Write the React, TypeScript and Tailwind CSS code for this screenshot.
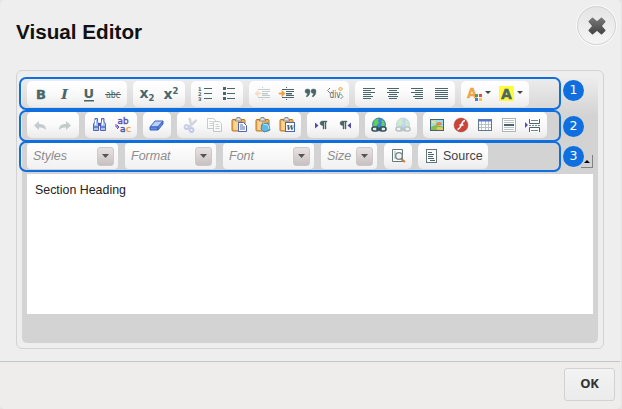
import type { ReactNode } from 'react';

const INK = '#4a6668';

function Group({ children }: { children: ReactNode }) {
  return (
    <div className="flex h-[26px] items-center rounded-[5px] bg-linear-to-b from-white via-[#fafafa] to-[#ebebeb] px-[2px]">
      {children}
    </div>
  );
}

function Btn({ label, faded, children }: { label: string; faded?: boolean; children: ReactNode }) {
  return (
    <button aria-label={label} className={`flex h-[26px] w-6 items-center justify-center ${faded ? 'opacity-30' : ''}`}>
      <svg width="16" height="16" viewBox="0 0 16 16" className="overflow-visible">
        {children}
      </svg>
    </button>
  );
}

/* Horizontal strokes given as [x, y, width]. */
function Lines({ rows, color = INK, h = 1 }: { rows: number[][]; color?: string; h?: number }) {
  return (
    <>
      {rows.map(([x, y, w], i) => (
        <rect key={i} x={x} y={y} width={w} height={h} fill={color} />
      ))}
    </>
  );
}

function AlignIcon({ kind }: { kind: 'left' | 'center' | 'right' | 'justify' }) {
  return (
    <Lines
      rows={[12, 8, 12, 8, 10, 8].map((ragged, i) => {
        const w = kind === 'justify' ? 13 : ragged;
        const x = kind === 'center' ? 8 - w / 2 : kind === 'right' ? 14 - w : 2;
        return [x, 2 + i * 2, w];
      })}
    />
  );
}

function Indent({ faded }: { faded?: boolean }) {
  return (
    <>
      <path d={faded ? 'M6 7v1H3v2.500L0 7.500 3 4.500V7z' : 'M0 7v1h3v2.500L6 7.500 3 4.500V7z'} fill="#f0a040" stroke="#f0a040" strokeWidth=".8" />
      <Lines rows={[[7, 1, 1], [3, 3, 12], [7, 5, 8], [7, 9, 8], [3, 11, 12], [7, 13, 1]]} />
      <rect x="7" y="7" width="6" height="1.500" fill={INK} />
    </>
  );
}

function Clipboard() {
  return (
    <>
      <rect x="1" y="2.500" width="13" height="11.500" rx="1" fill="#eeb15b" stroke="#b87528" />
      <path d="M2.500 4h4.500v9H2.500z" fill="#fbd494" />
      <path d="M4.500 4V2H6V.5h3V2h1.500v2z" fill="#e5e1df" stroke="#777" strokeWidth=".8" />
    </>
  );
}

function LinkIcon() {
  return (
    <>
      <circle cx="8" cy="7.500" r="6.500" fill="#3f83e3" stroke="#285eae" strokeWidth=".7" />
      <path d="M3 4q2-3 5-2l-1 2 1 2-2 2-1 3-3-2zM10 3l3 1 1 4-2 2-2-2 1-2z" fill="#60d150" />
      <rect x="1" y="10" width="6" height="4" rx="2" fill="#e5eded" stroke="#344f52" strokeWidth="1.600" />
      <rect x="9" y="10" width="6" height="4" rx="2" fill="#e5eded" stroke="#344f52" strokeWidth="1.600" />
      <path d="M5 12h6" stroke="#344f52" strokeWidth="1.500" />
    </>
  );
}

function Pilcrow({ x }: { x: number }) {
  return <path transform={`translate(${x} 0)`} d="M7 4v1H6v7H5V5H4v7H3V8.500H2Q0 8 0 6.200T2 4z" fill={INK} stroke={INK} strokeWidth=".4" />;
}

function Combo({ label, wide = true }: { label: string; wide?: boolean }) {
  return (
    <button
      className={`flex h-[26px] items-center justify-between rounded-[4px] bg-linear-to-b from-white to-[#f1f1f1] pr-1 pl-1.5 ${wide ? 'w-[91px]' : 'w-14'}`}
    >
      <span className="font-['Liberation_Sans',sans-serif] text-[12.5px] text-[#8c8c8c] italic">{label}</span>
      <span className="flex h-[19px] w-[17px] items-center justify-center rounded-[3px] border border-[#cfc8c8] bg-linear-to-b from-[#e8e3e3] to-[#c8c0c0]">
        <svg width="7" height="4" viewBox="0 0 7 4" className="-mt-px">
          <path d="M0 0h7L3.500 4z" fill="#555" />
        </svg>
      </span>
    </button>
  );
}

function Caret() {
  return (
    <svg width="6" height="3" viewBox="0 0 6 3" className="mb-[3px] -ml-[2px]">
      <path d="M0 0h6L3 3z" fill="#444" />
    </svg>
  );
}

function Marker({ n, className }: { n: number; className: string }) {
  return (
    <span
      className={`absolute left-[563px] flex h-[21px] w-[21px] items-center justify-center rounded-full bg-[#0f6fde] font-['DejaVu_Sans',sans-serif] text-[12.5px] leading-none text-white ${className}`}
    >
      {n}
    </span>
  );
}

export default function App() {
  return (
    <div className="relative h-[409px] w-[622px] overflow-hidden bg-[#e4e4e4] font-['Liberation_Sans',sans-serif]">
      <div className="flex h-[409px] w-[621px] flex-col rounded-[5px] bg-[#eeeeee]">
        <header className="h-[70px] pt-5 pl-4">
          <h1 className="text-[20.7px] leading-6 font-bold text-[#111]">Visual Editor</h1>
        </header>

        <main className="ml-4 h-[279px] w-[588px] rounded-[6px] border border-[#d3d3d3] p-[5px]">
          <div className="h-[267px] rounded-[5px] bg-[#d3d3d3] bg-linear-to-b from-[#eeeeee] to-[#d3d3d3] to-[40px] px-[5px] pt-[5px]">
            <div className="flex h-[31px] gap-1.5">
              <Group>
                <Btn label="Bold">
                  <text x="3" y="12.500" fontSize="13" fontWeight="700" fontFamily="DejaVu Sans" fill={INK} stroke={INK} strokeWidth=".4">B</text>
                </Btn>
                <Btn label="Italic">
                  <text x="4" y="12.500" fontSize="13" fontWeight="700" fontStyle="italic" fontFamily="DejaVu Serif" textLength="7" lengthAdjust="spacingAndGlyphs" fill={INK}>I</text>
                </Btn>
                <Btn label="Underline">
                  <text x="2.500" y="12" fontSize="13" fontWeight="700" fontFamily="DejaVu Sans" fill={INK}>U</text>
                  <rect x="3" y="14" width="10" height="1.500" fill={INK} />
                </Btn>
                <Btn label="Strike through">
                  <text x="1" y="11.500" fontSize="10" fontFamily="DejaVu Sans" textLength="14" lengthAdjust="spacingAndGlyphs" fill={INK}>abc</text>
                  <rect x="0" y="8" width="16" height="1" fill={INK} />
                </Btn>
              </Group>
              <Group>
                <Btn label="Subscript">
                  <text x="0.500" y="12" fontSize="14.500" fontWeight="700" fontFamily="DejaVu Sans" textLength="9" lengthAdjust="spacingAndGlyphs" fill={INK}>x</text>
                  <text x="9.500" y="15" fontSize="8.500" fontWeight="700" fontFamily="DejaVu Sans" fill={INK}>2</text>
                </Btn>
                <Btn label="Superscript">
                  <text x="0.500" y="13" fontSize="14.500" fontWeight="700" fontFamily="DejaVu Sans" textLength="9" lengthAdjust="spacingAndGlyphs" fill={INK}>x</text>
                  <text x="9.500" y="8" fontSize="8.500" fontWeight="700" fontFamily="DejaVu Sans" fill={INK}>2</text>
                </Btn>
              </Group>
              <Group>
                <Btn label="Numbered list">
                  {[1, 2, 3].map((n) => (
                    <g key={n}>
                      <text x="1" y={n * 5} fontSize="5" fontWeight="700" fontFamily="DejaVu Sans" fill={INK}>{n}</text>
                      <rect x="7" y={n * 5 - 3} width="8" height="1" fill={INK} />
                    </g>
                  ))}
                </Btn>
                <Btn label="Bulleted list">
                  {[2, 7, 12].map((y) => (
                    <g key={y}>
                      <rect x="2" y={y - 1} width="3" height="3" fill={INK} />
                      <rect x="6" y={y} width="8" height="1" fill={INK} />
                    </g>
                  ))}
                </Btn>
              </Group>
              <Group>
                <Btn label="Outdent" faded><Indent faded /></Btn>
                <Btn label="Indent"><Indent /></Btn>
                <Btn label="Quote">
                  {[2, 8].map((x) => (
                    <path key={x} transform={`translate(${x} 3)`} d="M2.500 0A2.300 2.300 0 0 1 5 2.500Q5 6 2 8L1 7.200Q2.500 6 2.500 4.500 0 4.500 0 2.300A2.300 2.300 0 0 1 2.500 0" fill={INK} stroke={INK} strokeWidth=".4" />
                  ))}
                </Btn>
                <Btn label="Div container">
                  <path d="M3 2L.5 4.500 3 7M13.500 8l2.500 2.500-2.500 2.500" fill="none" stroke={INK} strokeDasharray="1.500 .5" />
                  <text x="2.500" y="12" fontSize="10" fontFamily="DejaVu Sans" textLength="11" lengthAdjust="spacingAndGlyphs" fill={INK}>div</text>
                  <path d="M13.500 1l2 2-2 2-2-2z" fill="#ffe5b8" stroke="#eea037" />
                </Btn>
              </Group>
              <Group>
                <Btn label="Align left"><AlignIcon kind="left" /></Btn>
                <Btn label="Center"><AlignIcon kind="center" /></Btn>
                <Btn label="Align right"><AlignIcon kind="right" /></Btn>
                <Btn label="Justify"><AlignIcon kind="justify" /></Btn>
              </Group>
              <Group>
                <div className="flex w-8 items-center">
                  <Btn label="Text color">
                    <text x="0" y="12" fontSize="14" fontWeight="700" fontFamily="DejaVu Sans" textLength="10" lengthAdjust="spacingAndGlyphs" fill="#efa44c" stroke="#efa44c" strokeWidth=".3">A</text>
                    <rect x="8" y="8" width="3" height="3" fill="#43aa52" />
                    <rect x="12" y="8" width="3" height="3" fill="#ee4747" />
                    <rect x="8" y="12" width="3" height="3" fill="#477be9" />
                    <rect x="12" y="12" width="3" height="3" fill="#ffc33d" />
                  </Btn>
                  <Caret />
                </div>
                <div className="flex w-8 items-center">
                  <Btn label="Background color">
                    <rect x="0" y="0" width="15" height="15" fill="#fffb38" />
                    <text x="2" y="12.500" fontSize="14" fontWeight="700" fontFamily="DejaVu Sans" fill={INK} stroke={INK} strokeWidth=".4">A</text>
                  </Btn>
                  <Caret />
                </div>
              </Group>
            </div>

            <div className="flex h-[31px] gap-1.5">
              <Group>
                <Btn label="Undo" faded>
                  <path d="M1 8.500L6 4v3c5 0 7 2 7 6-2-2-4-2.500-7-2.500v2.500z" fill={INK} />
                </Btn>
                <Btn label="Redo" faded>
                  <path d="M14 8.500L9 4v3c-5 0-7 2-7 6 2-2 4-2.500 7-2.500v2.500z" fill={INK} />
                </Btn>
              </Group>
              <Group>
                <Btn label="Find">
                  <path d="M4 1.500h2.500v3L7.500 7v6.500h-5V7L4 5zM10.500 1.500H13v3L14.500 7v6.500h-5V7l1-2.500z" fill="#a5c8f8" stroke="#5c61b8" />
                  <path d="M7 6h3v3H7z" fill="#4c51ae" />
                  <path d="M3 10h4M10 10h4" stroke="#5270c0" strokeWidth="1.500" />
                  <path d="M4.500 3v5M11.500 3v5" stroke="#fff" />
                </Btn>
                <Btn label="Replace">
                  <text x="2.500" y="7" fontSize="9" fontFamily="DejaVu Sans" textLength="11" lengthAdjust="spacingAndGlyphs" stroke="#5450b0" strokeWidth=".4" fill="#5450b0">ab</text>
                  <text x="5" y="15" fontSize="9" fontFamily="DejaVu Sans" stroke="#5450b0" strokeWidth=".4" fill="#5450b0">a</text>
                  <text x="11" y="15" fontSize="9" fontFamily="DejaVu Sans" stroke="#f0a73b" strokeWidth=".4" fill="#f0a73b">c</text>
                  <path d="M1 7v3h3M2 8l2 2-2 2" fill="none" stroke="#5450b0" />
                </Btn>
              </Group>
              <Group>
                <Btn label="Remove format">
                  <path d="M6 4h8l-5 6H1z" fill="#b6d1fc" stroke="#3e62bd" />
                  <path d="M1 10h8v3H1zM9 10l5-6v3l-5 6z" fill="#638ce0" stroke="#3e62bd" strokeLinejoin="round" />
                </Btn>
              </Group>
              <Group>
                <Btn label="Cut" faded>
                  <path d="M6.500 1l2 8M13.500 3L6 10" stroke="#789" strokeWidth="2.500" />
                  <circle cx="3.500" cy="10" r="2" fill="none" stroke="#5563ce" strokeWidth="1.800" />
                  <circle cx="8.500" cy="13" r="2" fill="none" stroke="#5563ce" strokeWidth="1.800" />
                </Btn>
                <Btn label="Copy" faded>
                  {[[0.500, 1.500], [6.500, 4.500]].map(([x, y]) => (
                    <g key={x} transform={`translate(${x} ${y})`}>
                      <path d="M0 0h6l2 2v8H0z" fill="#fff" stroke={INK} />
                      <path d="M2 3h3M2 5h4M2 7h4" stroke="#687978" />
                    </g>
                  ))}
                </Btn>
                <Btn label="Paste">
                  <Clipboard />
                  <path d="M7.500 5.500h5l3 3v6h-8z" fill="#fff" stroke="#4c65b5" />
                  <path d="M9 8h3M9 10h5M9 12h5" stroke="#566caf" />
                </Btn>
                <Btn label="Paste as plain text">
                  <Clipboard />
                  <path d="M7 7l6-1 2 7-6 2-3-3z" fill="#63b9e1" stroke="#4286bb" />
                  <path d="M8 7l5 1 1 4" fill="none" stroke="#b6e6f7" />
                </Btn>
                <Btn label="Paste from Word">
                  <Clipboard />
                  <rect x="6.500" y="5.500" width="9" height="9" fill="#fff" stroke="#4c65b5" />
                  <text x="7.500" y="13" fontSize="8" fontWeight="700" fontStyle="italic" fontFamily="DejaVu Serif" textLength="8" lengthAdjust="spacingAndGlyphs" fill="#425c66">W</text>
                </Btn>
              </Group>
              <Group>
                <Btn label="Left to right">
                  <path d="M2 5.500l3.500 3L2 11.500z" fill="#4f4ba7" />
                  <Pilcrow x={7} />
                </Btn>
                <Btn label="Right to left">
                  <Pilcrow x={3} />
                  <path d="M14 5.500l-3.500 3 3.500 3z" fill="#4f4ba7" />
                </Btn>
              </Group>
              <Group>
                <Btn label="Link"><LinkIcon /></Btn>
                <Btn label="Unlink" faded><LinkIcon /></Btn>
              </Group>
              <Group>
                <Btn label="Image">
                  <rect x="1.500" y="2.500" width="13" height="11" fill="#9ddcf2" stroke="#456369" />
                  <path d="M2 10q6-4 12 0v3H2z" fill="#87bd4e" />
                  <path d="M7 11q4-2 7 0v2H9z" fill="#e5c868" />
                  <path d="M7 8q0-3 3-3t3 3z" fill="#ed873d" />
                  <path d="M3 4h3v2H3z" fill="#ffe264" />
                </Btn>
                <Btn label="Flash">
                  <circle cx="8" cy="8" r="7" fill="#cb4439" stroke="#a64b43" strokeWidth=".5" />
                  <path d="M12 3.500c-4 0-3 8-7.500 9M6.500 8h4" fill="none" stroke="#fff" strokeWidth="1.500" />
                </Btn>
                <Btn label="Table">
                  <rect x="1.500" y="2.500" width="13" height="11" fill="#fff" stroke="#617783" />
                  <path d="M4.500 4v9M8.500 4v9M11.500 4v9M2 7.500h12M2 10.500h12" stroke="#b8c1c5" />
                  <rect x="1" y="2" width="14" height="2.500" fill="#5b79c4" />
                </Btn>
                <Btn label="Horizontal line">
                  <rect x="1.500" y="1.500" width="13" height="13" fill="#fff" stroke="#adb5b4" />
                  <Lines rows={[[3, 3, 10], [3, 5, 10], [3, 10, 10], [3, 12, 10]]} color="#bcc3c2" />
                  <rect x="3" y="7" width="10" height="2" fill={INK} />
                </Btn>
                <Btn label="Page break">
                  <path d="M0 5l3 3-3 3z" fill="#5450b0" />
                  <path d="M4.500 2v4.500h10V2M4.500 15v-4.500h10V15" fill="#fff" stroke={INK} />
                  <path d="M6 3.500h7M6 13.500h7M4 8.500h2m1 0h2m1 0h2m1 0h2" stroke="#73888a" />
                </Btn>
              </Group>
            </div>

            <div className="flex h-[31px]">
              <div className="flex gap-[7px]">
                <Combo label="Styles" />
                <Combo label="Format" />
                <Combo label="Font" />
                <Combo label="Size" wide={false} />
              </div>
              <div className="ml-[7px] flex flex-1 gap-1.5">
                <Group>
                  <Btn label="Preview">
                    <path d="M2.500 1.500h10v12h-10z" fill="#fff" stroke="#657878" />
                    <path d="M4 4h2M4 6h2M4 8h2M4 10h2" stroke="#9ba6a5" />
                    <path d="M11 11l4 3" stroke="#bf7d3e" strokeWidth="2" />
                    <circle cx="9" cy="8" r="3.300" fill="#eef2f3" stroke="#778589" strokeWidth="1.300" />
                  </Btn>
                </Group>
                <Group>
                  <div className="flex w-[66px] items-center">
                    <Btn label="Source">
                      <rect x="2.500" y="1.500" width="10" height="13" fill="#fff" stroke="#657878" />
                      <Lines rows={[[4, 4, 4], [4, 6, 6], [4, 8, 5], [4, 10, 6], [6, 12, 5]]} />
                    </Btn>
                    <span className="-ml-px text-[12.5px] text-[#444]">Source</span>
                  </div>
                </Group>
                <button aria-label="Collapse toolbar" className="mt-3 ml-auto flex h-[13px] w-3 items-center justify-center border-r border-b border-[#808080]">
                  <svg width="6" height="3" viewBox="0 0 6 3">
                    <path d="M0 3h6L3 0z" fill="#000" />
                  </svg>
                </button>
              </div>
            </div>

            <div className="h-[140px] bg-white px-2 pt-2 text-[12.4px] leading-4 text-[#222]">Section Heading</div>
          </div>
        </main>

        <footer className="mt-3 flex h-[48px] w-[620px] justify-end rounded-b-[5px] border-t border-[#c5c5c5] bg-[#eeedeb] pt-1.5 pr-[5px]">
          <button className="h-[33px] w-[51px] rounded-[3px] border border-[#d2d2d2] bg-linear-to-b from-[#f3f3f3] to-[#ebebeb] pb-px font-['Noto_Sans','Open_Sans',sans-serif] text-[13px] font-bold tracking-[-0.3px] text-[#333]">
            OK
          </button>
        </footer>
      </div>

      <div className="absolute top-[77px] left-[19px] h-[33px] w-[542px] rounded-[7px] border-2 border-[#0f6fde]" />
      <div className="absolute top-[110px] left-[19px] h-[32px] w-[542px] rounded-[7px] border-2 border-[#0f6fde]" />
      <div className="absolute top-[141px] left-[19px] h-[31px] w-[542px] rounded-[7px] border-2 border-[#0f6fde]" />
      <Marker n={1} className="top-[80px]" />
      <Marker n={2} className="top-[116px]" />
      <Marker n={3} className="top-[146px]" />

      <button aria-label="Close" className="absolute top-[6px] left-[577px] flex h-[39px] w-[39px] items-center justify-center rounded-full border border-[#d2d2d2] bg-linear-to-b from-[#e4e4e4] to-[#f5f5f5] shadow-[0_0_0_1px_#fafafa]">
        <svg width="18" height="18" viewBox="0 0 18 18">
          <defs>
            <linearGradient id="cross" x1="0" y1="0" x2="0" y2="1">
              <stop offset="0" stopColor="#777" />
              <stop offset="1" stopColor="#444" />
            </linearGradient>
          </defs>
          <path d="M4.500 1.200L9 5 13.500 1.200 16.800 4.500 13 9l3.800 4.500-3.300 3.300L9 13l-4.500 3.800L1.200 13.500 5 9 1.200 4.500z" fill="url(#cross)" stroke="url(#cross)" strokeWidth="1.500" strokeLinejoin="round" />
        </svg>
      </button>
    </div>
  );
}
